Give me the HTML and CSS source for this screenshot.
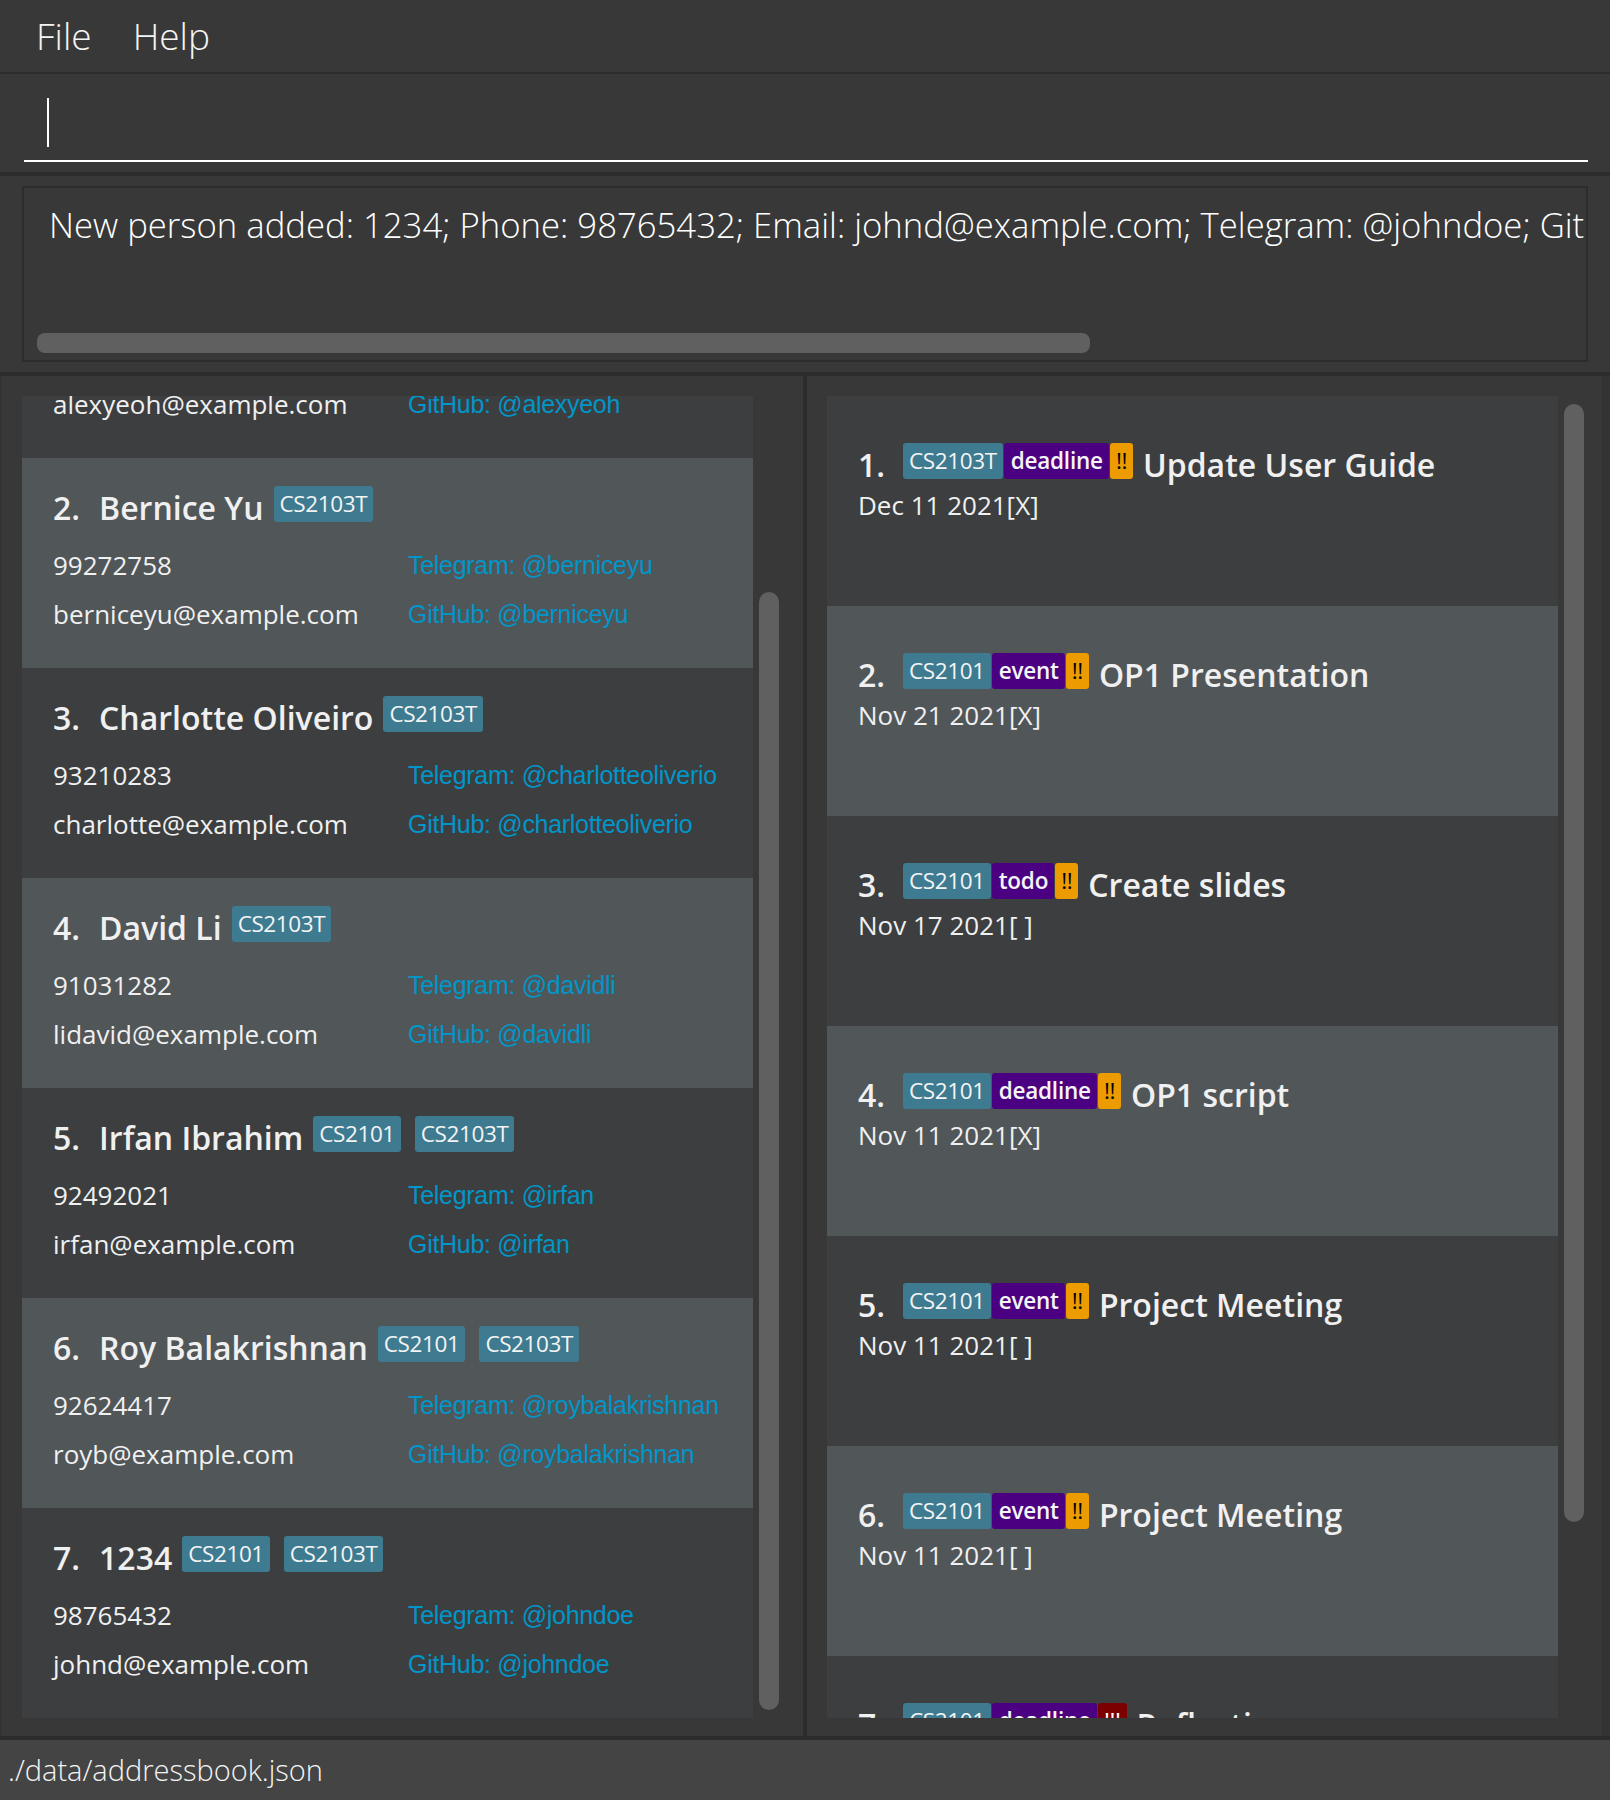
FILE: index.html
```html
<!DOCTYPE html>
<html>
<head>
<meta charset="utf-8">
<link rel="stylesheet" href="styles.css">
</head>
<body>
<div class="app">
  <div class="menubar">
    <span class="menu-item">File</span>
    <span class="menu-item">Help</span>
  </div>
  <div class="command">
    <div class="command-field"><span class="caret"></span></div>
  </div>
  <div class="result">
    <div class="result-box">
      <div class="result-text">New person added: 1234; Phone: 98765432; Email: johnd@example.com; Telegram: @johndoe; GitHub: @johndoe; Tags: [CS2101][CS2103T]</div>
      <div class="hscroll"><div class="hthumb"></div></div>
    </div>
  </div>
  <div class="lists">
    <div class="panel panel-left">
      <div class="viewport">
        <div class="cards shifted">
          <div class="pcard odd">
            <div class="name-row"><span class="idx">1.</span><span class="name">Alex Yeoh</span><span class="tags"><span class="tag">CS2103T</span></span></div>
            <div class="info"><span class="val">87438807</span><span class="link">Telegram: @alexyeoh</span><span class="val">alexyeoh@example.com</span><span class="link">GitHub: @alexyeoh</span></div>
          </div>
          <div class="pcard even">
            <div class="name-row"><span class="idx">2.</span><span class="name">Bernice Yu</span><span class="tags"><span class="tag">CS2103T</span></span></div>
            <div class="info"><span class="val">99272758</span><span class="link">Telegram: @berniceyu</span><span class="val">berniceyu@example.com</span><span class="link">GitHub: @berniceyu</span></div>
          </div>
          <div class="pcard odd">
            <div class="name-row"><span class="idx">3.</span><span class="name">Charlotte Oliveiro</span><span class="tags"><span class="tag">CS2103T</span></span></div>
            <div class="info"><span class="val">93210283</span><span class="link">Telegram: @charlotteoliverio</span><span class="val">charlotte@example.com</span><span class="link">GitHub: @charlotteoliverio</span></div>
          </div>
          <div class="pcard even">
            <div class="name-row"><span class="idx">4.</span><span class="name">David Li</span><span class="tags"><span class="tag">CS2103T</span></span></div>
            <div class="info"><span class="val">91031282</span><span class="link">Telegram: @davidli</span><span class="val">lidavid@example.com</span><span class="link">GitHub: @davidli</span></div>
          </div>
          <div class="pcard odd">
            <div class="name-row"><span class="idx">5.</span><span class="name">Irfan Ibrahim</span><span class="tags"><span class="tag">CS2101</span><span class="tag">CS2103T</span></span></div>
            <div class="info"><span class="val">92492021</span><span class="link">Telegram: @irfan</span><span class="val">irfan@example.com</span><span class="link">GitHub: @irfan</span></div>
          </div>
          <div class="pcard even">
            <div class="name-row"><span class="idx">6.</span><span class="name">Roy Balakrishnan</span><span class="tags"><span class="tag">CS2101</span><span class="tag">CS2103T</span></span></div>
            <div class="info"><span class="val">92624417</span><span class="link">Telegram: @roybalakrishnan</span><span class="val">royb@example.com</span><span class="link">GitHub: @roybalakrishnan</span></div>
          </div>
          <div class="pcard odd">
            <div class="name-row"><span class="idx">7.</span><span class="name">1234</span><span class="tags"><span class="tag">CS2101</span><span class="tag">CS2103T</span></span></div>
            <div class="info"><span class="val">98765432</span><span class="link">Telegram: @johndoe</span><span class="val">johnd@example.com</span><span class="link">GitHub: @johndoe</span></div>
          </div>
        </div>
      </div>
      <div class="vscroll vscroll-left"><div class="vthumb"></div></div>
    </div>
    <div class="divider"></div>
    <div class="panel panel-right">
      <div class="viewport">
        <div class="cards">
          <div class="tcard odd">
            <div class="title-row"><span class="idx">1.</span><span class="ttags"><span class="tag">CS2103T</span><span class="tag type">deadline</span><span class="tag prio">!!</span></span><span class="title">Update User Guide</span></div>
            <div class="date">Dec 11 2021[X]</div>
          </div>
          <div class="tcard even">
            <div class="title-row"><span class="idx">2.</span><span class="ttags"><span class="tag">CS2101</span><span class="tag type">event</span><span class="tag prio">!!</span></span><span class="title">OP1 Presentation</span></div>
            <div class="date">Nov 21 2021[X]</div>
          </div>
          <div class="tcard odd">
            <div class="title-row"><span class="idx">3.</span><span class="ttags"><span class="tag">CS2101</span><span class="tag type">todo</span><span class="tag prio">!!</span></span><span class="title">Create slides</span></div>
            <div class="date">Nov 17 2021[ ]</div>
          </div>
          <div class="tcard even">
            <div class="title-row"><span class="idx">4.</span><span class="ttags"><span class="tag">CS2101</span><span class="tag type">deadline</span><span class="tag prio">!!</span></span><span class="title">OP1 script</span></div>
            <div class="date">Nov 11 2021[X]</div>
          </div>
          <div class="tcard odd">
            <div class="title-row"><span class="idx">5.</span><span class="ttags"><span class="tag">CS2101</span><span class="tag type">event</span><span class="tag prio">!!</span></span><span class="title">Project Meeting</span></div>
            <div class="date">Nov 11 2021[ ]</div>
          </div>
          <div class="tcard even">
            <div class="title-row"><span class="idx">6.</span><span class="ttags"><span class="tag">CS2101</span><span class="tag type">event</span><span class="tag prio">!!</span></span><span class="title">Project Meeting</span></div>
            <div class="date">Nov 11 2021[ ]</div>
          </div>
          <div class="tcard odd">
            <div class="title-row"><span class="idx">7.</span><span class="ttags"><span class="tag">CS2101</span><span class="tag type">deadline</span><span class="tag prio high">!!!</span></span><span class="title">Reflection</span></div>
            <div class="date">Nov 10 2021[ ]</div>
          </div>
        </div>
      </div>
      <div class="vscroll vscroll-right"><div class="vthumb"></div></div>
    </div>
    <div class="edge"></div>
  </div>
  <div class="status">./data/addressbook.json</div>
</div>
</body>
</html>
```
FILE: styles.css
```css
html, body {
  margin: 0;
  padding: 0;
  background: #383838;
}
body {
  width: 1610px;
  height: 1800px;
  overflow: hidden;
  font-family: "Open Sans", "Liberation Sans", sans-serif;
  color: #ffffff;
}
.app {
  display: flex;
  flex-direction: column;
  height: 1800px;
}

/* menu */
.menubar {
  height: 72px;
  flex: none;
  display: flex;
  align-items: center;
  gap: 41px;
  padding-left: 36px;
  background: #383838;
  border-bottom: 2px solid #2c2c2c;
  box-sizing: content-box;
}
.menu-item {
  font-weight: 300;
  font-size: 37px;
  color: #f4f4f4;
  line-height: 1;
  margin-top: -2px;
}

/* command box */
.command {
  height: 98px;
  flex: none;
  background: #383838;
  border-bottom: 4px solid #2c2c2c;
  padding: 0 22px 0 24px;
}
.command-field {
  height: 88px;
  border-bottom: 2px solid #ffffff;
  padding-left: 23px;
  padding-top: 24px;
  box-sizing: border-box;
}
.caret {
  display: block;
  width: 2px;
  height: 49px;
  background: #ffffff;
}

/* result display */
.result {
  flex: none;
  background: #383838;
  border-bottom: 4px solid #2c2c2c;
  padding: 10px 22px 0 22px;
  box-sizing: border-box;
  height: 200px;
}
.result-box {
  height: 176px;
  box-sizing: border-box;
  border: 2px solid #2c2c2c;
  display: flex;
  flex-direction: column;
  overflow: hidden;
}
.result-text {
  white-space: nowrap;
  font-weight: 300;
  font-size: 34.7px;
  line-height: 48px;
  padding: 13px 0 0 25px;
  color: #ffffff;
}
.hscroll {
  margin-top: auto;
  margin-bottom: 7px;
  padding-left: 13px;
}
.hthumb {
  width: 1053px;
  height: 20px;
  border-radius: 8px;
  background: #606060;
}

/* lists */
.lists {
  flex: none;
  height: 1364px;
  display: flex;
  background: #383838;
  border-bottom: 4px solid #2c2c2c;
  box-sizing: border-box;
}
.panel {
  display: flex;
  padding-top: 20px;
  box-sizing: border-box;
}
.panel-left {
  width: 803px;
  padding-left: 20px;
  border-left: 2px solid #333333;
}
.panel-right {
  width: 795px;
  padding-left: 20px;
}
.divider {
  width: 4px;
  background: #2c2c2c;
}
.edge {
  flex: 1;
  background: #333333;
}
.viewport {
  width: 731px;
  height: 1322px;
  overflow: hidden;
}
.cards.shifted {
  margin-top: -148px;
}
.vscroll {
  width: 20px;
  margin-left: 6px;
}
.vthumb {
  width: 20px;
  border-radius: 10px;
  background: #606060;
}
.vscroll-left .vthumb {
  margin-top: 196px;
  height: 1118px;
}
.vscroll-right .vthumb {
  margin-top: 8px;
  height: 1118px;
}

.odd { background: #3c3e3f; }
.even { background: #515658; }

/* person card */
.pcard {
  height: 210px;
  box-sizing: border-box;
  padding: 28px 0 0 31px;
}
.name-row {
  display: flex;
  align-items: flex-start;
  height: 36px;
}
.idx {
  font-weight: 600;
  font-size: 32px;
  line-height: 32px;
  margin-top: 6px;
  color: #f0f0f0;
}
.name {
  font-weight: 600;
  font-size: 32px;
  line-height: 32px;
  margin-top: 6px;
  margin-left: 19px;
  color: #f0f0f0;
}
.tags {
  display: flex;
  gap: 14px;
  margin-left: 10px;
}
.tag {
  display: block;
  height: 36px;
  line-height: 35px;
  font-size: 22.5px;
  font-weight: 500;
  letter-spacing: -0.4px;
  padding: 0 6px 0 6px;
  background: #3e7b91;
  border-radius: 3px;
  color: #f4f4f4;
}
.info {
  display: grid;
  grid-template-columns: 355px 1fr;
  margin-top: 19px;
}
.val {
  font-size: 26px;
  line-height: 49px;
  color: #f0f0f0;
}
.link {
  font-family: "Liberation Sans", Arial, sans-serif;
  font-size: 25px;
  line-height: 49px;
  letter-spacing: -0.3px;
  color: #0096c9;
}

/* task card */
.tcard {
  height: 210px;
  box-sizing: border-box;
  padding: 47px 0 0 31px;
}
.title-row {
  display: flex;
  align-items: flex-start;
  height: 36px;
}
.ttags {
  display: flex;
  gap: 1px;
  margin-left: 18px;
}
.tag.type {
  background: #4b0082;
  padding: 0 6px 0 7px;
  font-weight: 600;
  letter-spacing: -0.2px;
}
.tag.prio {
  background: #ec9c00;
  color: #000000;
  padding: 0 6px;
}
.tag.prio.high {
  background: #7d0000;
  color: #ffffff;
}
.title {
  font-weight: 600;
  font-size: 32px;
  line-height: 32px;
  margin-top: 6px;
  margin-left: 10px;
  color: #f0f0f0;
}
.date {
  font-size: 26px;
  line-height: 30px;
  margin-top: 11px;
  color: #f0f0f0;
}

/* status bar */
.status {
  flex: 1;
  background: #444444;
  font-weight: 300;
  font-size: 29px;
  line-height: 60px;
  padding-left: 8px;
  color: #f4f4f4;
}
```
